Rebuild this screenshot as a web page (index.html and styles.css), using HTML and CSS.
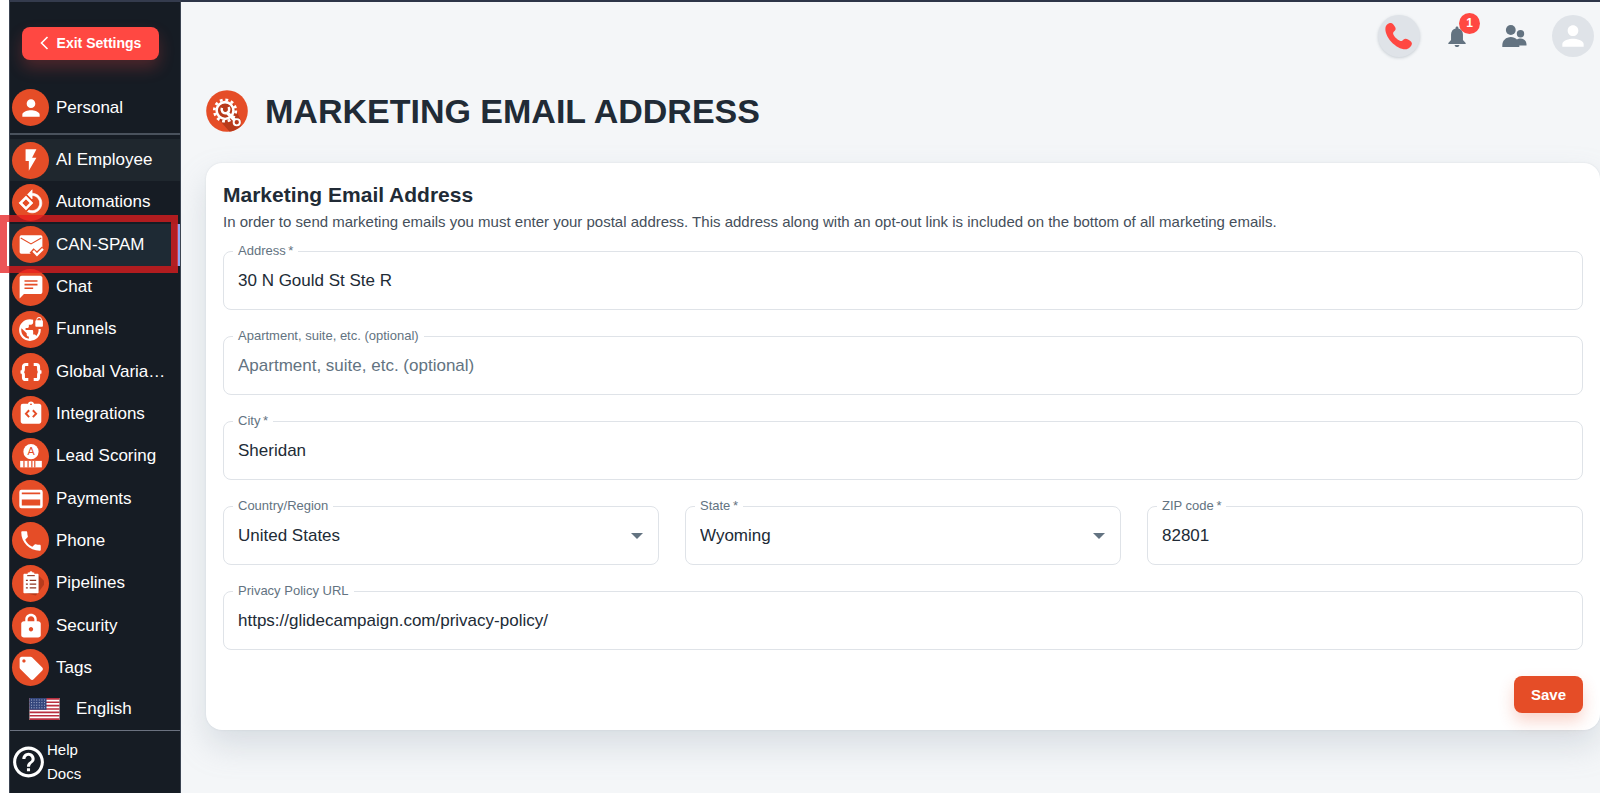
FILE: index.html
```html
<!DOCTYPE html>
<html lang="en">
<head>
  <meta charset="UTF-8">
  <meta name="viewport" content="width=device-width, initial-scale=1.0">
  <title>Marketing Email Address</title>
  <link rel="stylesheet" href="styles.css">
</head>
<body>
  <aside class="sidebar">
    <div class="exit">
      <button type="button" class="exit-btn">
        <svg width="9" height="14" viewBox="0 0 9 14"><path d="M7.5 1L1.5 7l6 6" fill="none" stroke="#fff" stroke-width="1.6"/></svg>
        Exit Settings
      </button>
    </div>

    <a href="#" class="nav-item personal">
      <span class="nav-icon"><svg viewBox="0 0 24 24"><path d="M12 12c2.21 0 4-1.79 4-4s-1.79-4-4-4-4 1.79-4 4 1.79 4 4 4zm0 2c-2.67 0-8 1.34-8 4v2h16v-2c0-2.66-5.33-4-8-4z"/></svg></span>
      <span class="nav-text">Personal</span>
    </a>

    <nav class="nav">
      <a href="#" class="nav-item hover">
        <span class="nav-icon"><svg viewBox="0 0 24 24"><path d="M7 2v11h3v9l7-12h-4l4-8z"/></svg></span>
        <span class="nav-text">AI Employee</span>
      </a>
      <a href="#" class="nav-item">
        <span class="nav-icon"><svg viewBox="0 0 24 24"><path stroke="#fff" stroke-width=".6" d="M7.34 6.41L.86 12.9l6.49 6.48 6.49-6.48-6.5-6.49zM3.69 12.9l3.66-3.66L11 12.9l-3.66 3.66-3.65-3.66zm15.67-6.26C17.61 4.88 15.3 4 13 4V.76L8.76 5 13 9.24V6c1.79 0 3.58.68 4.95 2.05 2.73 2.73 2.73 7.17 0 9.9C16.58 19.32 14.79 20 13 20c-.97 0-1.94-.21-2.84-.61l-1.49 1.49C10.02 21.62 11.51 22 13 22c2.3 0 4.61-.88 6.36-2.64 3.52-3.51 3.52-9.21 0-12.72z"/></svg></span>
        <span class="nav-text">Automations</span>
      </a>
      <a href="#" class="nav-item active">
        <span class="nav-icon"><svg viewBox="0 0 24 24"><rect x="1.5" y="3" width="21" height="17" rx="1.5"/><path d="M2.5 5.5l9.5 5.5 9.5-5.5" fill="none" stroke="#e54d27" stroke-width="1.1"/><path d="M12.5 17l5 4.500 6.500-6" fill="none" stroke="#e54d27" stroke-width="5.500"/><path d="M14 17.500l3.500 3.500 5.500-5.500" fill="none" stroke="#fff" stroke-width="2.200"/></svg></span>
        <span class="nav-text">CAN-SPAM</span>
        <span class="highlight"></span>
      </a>
      <a href="#" class="nav-item">
        <span class="nav-icon"><svg viewBox="0 0 24 24"><path d="M20.500 1.500h-17C2.400 1.500 1.500 2.300 1.500 3.400V22.500l4-4h15c1.100 0 2-.9 2-2V3.500c0-1.100-.9-2-2-2z"/><path d="M6 6.500h12M6 9.800h12M6 13.100h8" stroke="#e54d27" stroke-width="1.500"/></svg></span>
        <span class="nav-text">Chat</span>
      </a>
      <a href="#" class="nav-item">
        <span class="nav-icon"><svg viewBox="0 0 24 24"><path d="M22 4v-.5C22 2.12 20.88 1 19.5 1S17 2.12 17 3.500V4c-.55 0-1 .45-1 1v4c0 .55.45 1 1 1h5c.55 0 1-.45 1-1V5c0-.55-.45-1-1-1zm-.8 0h-3.400v-.5c0-.94.76-1.700 1.700-1.700s1.700.76 1.700 1.700V4zm-2.280 8c.04.33.08.66.08 1 0 2.080-.8 3.970-2.100 5.390-.26-.81-1-1.390-1.900-1.390h-1v-3c0-.55-.45-1-1-1H7v-2h2c.55 0 1-.45 1-1V8h2c1.100 0 2-.9 2-2V3.460c-.95-.3-1.950-.46-3-.46C5.480 3 1 7.480 1 13s4.480 10 10 10 10-4.480 10-10c0-.34-.02-.67-.05-1h-2.030zM10 20.930c-3.950-.49-7-3.850-7-7.930 0-.62.08-1.210.21-1.790L8 16v1c0 1.100.9 2 2 2v1.930z"/></svg></span>
        <span class="nav-text">Funnels</span>
      </a>
      <a href="#" class="nav-item">
        <span class="nav-icon"><svg viewBox="0 0 24 24"><path d="M9.500 5H7.200C5.900 5 5 5.900 5 7.200v2.300c0 1.300-.9 2.500-2.700 2.500 1.800 0 2.700 1.200 2.700 2.500v2.300C5 18.100 5.900 19 7.200 19h2.300M14.500 5h2.300C18.100 5 19 5.900 19 7.200v2.300c0 1.300.9 2.500 2.700 2.500-1.800 0-2.700 1.200-2.700 2.500v2.300c0 1.300-.9 2.200-2.200 2.200h-2.300" fill="none" stroke="#fff" stroke-width="2.800"/></svg></span>
        <span class="nav-text">Global Varia…</span>
      </a>
      <a href="#" class="nav-item">
        <span class="nav-icon"><svg viewBox="0 0 24 24"><path d="M19.500 2.500h-4.700C14.400 1.300 13.300.5 12 .5s-2.400.8-2.800 2H4.500a2 2 0 0 0-2 2v14.500c0 1.100.9 2 2 2h15c1.100 0 2-.9 2-2V4.500c0-1.100-.9-2-2-2z"/><circle cx="12" cy="3" r=".8" fill="#e54d27"/><path d="M10.300 8.500L7.300 11.700l3 3.200M13.700 8.500l3 3.200-3 3.200" fill="none" stroke="#e54d27" stroke-width="1.800"/></svg></span>
        <span class="nav-text">Integrations</span>
      </a>
      <a href="#" class="nav-item">
        <span class="nav-icon"><svg viewBox="0 0 24 24"><circle cx="12" cy="8" r="7"/><text x="12" y="11.500" class="score-letter">A</text><path d="M2 16.500h20v6H2z"/><path d="M5.500 16.500v6M9.300 16.500v6M12.800 16.500v6M15.500 16.500v6" stroke="#e54d27" stroke-width="1.100"/></svg></span>
        <span class="nav-text">Lead Scoring</span>
      </a>
      <a href="#" class="nav-item">
        <span class="nav-icon"><svg viewBox="0 0 24 24"><rect x="1.200" y="3.500" width="21.600" height="17" rx="2"/><path d="M3.500 6h17v1.500h-17zM3.500 12.500h17V18h-17z" fill="#e54d27"/></svg></span>
        <span class="nav-text">Payments</span>
      </a>
      <a href="#" class="nav-item">
        <span class="nav-icon"><svg viewBox="0 0 24 24"><path d="M6.620 10.790c1.440 2.830 3.760 5.140 6.590 6.590l2.200-2.200c.27-.27.67-.36 1.020-.24 1.120.37 2.330.57 3.570.57.55 0 1 .45 1 1V20c0 .55-.45 1-1 1-9.390 0-17-7.610-17-17 0-.55.45-1 1-1h3.500c.55 0 1 .45 1 1 0 1.250.2 2.450.57 3.570.11.35.03.74-.25 1.020l-2.200 2.200z"/></svg></span>
        <span class="nav-text">Phone</span>
      </a>
      <a href="#" class="nav-item">
        <span class="nav-icon"><svg viewBox="0 0 24 24"><path d="M18.500 4.500l7 7-9 12-11-2.500z" fill="#b73a1c"/><path d="M6 3.500h3V2.200h1.500a1.600 1.600 0 0 1 3 0H15v1.300h3c.6 0 1 .4 1 1v16c0 .6-.4 1-1 1H6c-.6 0-1-.4-1-1v-16c0-.6.400-1 1-1z"/><path d="M8.500 5.200h7" stroke="#8f3420"/><path d="M7.300 9.500h1.800M7.300 13h1.800M7.300 16.500h1.800M10.800 9.500h6M10.800 13h6M10.800 16.500h6" stroke="#8f3420" stroke-width="1.200"/></svg></span>
        <span class="nav-text">Pipelines</span>
      </a>
      <a href="#" class="nav-item">
        <span class="nav-icon"><svg viewBox="0 0 24 24"><path d="M18.500 7.500h-1.200V5.800C17.300 2.900 15 .7 12 .7S6.700 2.900 6.700 5.800v1.700H5.500c-1.400 0-2.500 1-2.500 2.200v10.800c0 1.200 1.100 2 2.500 2h13c1.400 0 2.500-.8 2.500-2V9.700c0-1.200-1.100-2.200-2.500-2.200zM12 17c-1.100 0-2-.9-2-2s.9-2 2-2 2 .9 2 2-.9 2-2 2zm3.100-9.500H8.900V6c0-1.710 1.390-3.100 3.100-3.100 1.710 0 3.100 1.390 3.100 3.100v1.500z"/></svg></span>
        <span class="nav-text">Security</span>
      </a>
      <a href="#" class="nav-item">
        <span class="nav-icon"><svg viewBox="0 0 24 24"><path d="M22.410 11.580l-9.500-9.500C12.550 1.720 12 1.500 11.500 1.500H3.500c-1.100 0-2 .9-2 2v8c0 .55.22 1.050.59 1.420l9.500 9.500c.36.36.86.58 1.410.58.55 0 1.050-.22 1.410-.59l8-8c.37-.36.59-.86.59-1.410 0-.55-.23-1.060-.59-1.420zM5.500 7C4.670 7 4 6.330 4 5.500S4.670 4 5.500 4 7 4.670 7 5.500 6.330 7 5.500 7z"/></svg></span>
        <span class="nav-text">Tags</span>
      </a>
    </nav>

    <button type="button" class="language">
      <svg class="flag" viewBox="0 0 30 22">
        <rect width="30" height="22" fill="#fff"/>
        <path d="M0 .850h30M0 4.230h30M0 7.610h30M0 11h30M0 14.380h30M0 17.760h30M0 21.150h30" stroke="#b92f3f" stroke-width="1.700"/>
        <rect width="17" height="11.800" fill="#34467c"/>
        <path d="M1.500 2h15M1.500 4.600h15M1.500 7.200h15M1.500 9.800h15" stroke="#a9b3d0" stroke-width="1" stroke-dasharray="1 1.600"/>
      </svg>
      English
    </button>

    <a href="#" class="help">
      <svg width="37" height="38" viewBox="0 0 24 24"><path fill="#fff" d="M11 18h2v-2h-2v2zm1-16C6.480 2 2 6.480 2 12s4.480 10 10 10 10-4.480 10-10S17.520 2 12 2zm0 18c-4.410 0-8-3.590-8-8s3.590-8 8-8 8 3.590 8 8-3.590 8-8 8zm0-14c-2.210 0-4 1.790-4 4h2c0-1.100.9-2 2-2s2 .9 2 2c0 2-3 1.750-3 5h2c0-2.250 3-2.500 3-5 0-2.210-1.790-4-4-4z"/></svg>
      <span>Help<br>Docs</span>
    </a>
  </aside>

  <div class="content">
    <header class="topbar">
      <button type="button" class="top-btn filled raised" aria-label="Call">
        <svg width="42" height="42" viewBox="0 0 42 42"><path fill="#ff4842" d="M7.500 12.500c.3-2.400 3.200-4.600 5.400-4.500 1.500.1 2.600 1.500 3.700 3.300 1.300 2 1.500 3.200.2 4.500-1.200 1.200-2 1.700-1.600 3.200.8 2.600 4 5.600 7 6.900 1.600.6 2.400-.1 3.400-1.300 1.200-1.400 2.900-1.200 4.900.2 2.200 1.400 3.800 2.700 3.400 4.300-.5 2.200-2.900 4.700-5.400 5.100-4.600.6-10.700-2.500-15.300-7.500-4.200-4.600-6.400-10.200-5.700-14.200z"/></svg>
      </button>
      <button type="button" class="top-btn" aria-label="Notifications">
        <svg width="26" height="26" viewBox="0 0 24 24"><path fill="#637381" d="M9.800 20.300h4.400c0 1-1 1.900-2.200 1.900s-2.200-.9-2.200-1.900zM12 3.200c.8 0 1.300.6 1.300 1.300v.5c2.600.6 4.200 2.700 4.200 5.600v5l2.500 2.900v.8H4v-.8l2.500-2.900v-5c0-2.900 1.600-5 4.200-5.600v-.5c0-.7.5-1.300 1.300-1.300z"/></svg>
        <span class="badge">1</span>
      </button>
      <button type="button" class="top-btn" aria-label="Contacts">
        <svg width="26" height="26" viewBox="0 0 26 26"><g fill="#637381"><circle cx="8.800" cy="7" r="4.900"/><circle cx="18.500" cy="10.700" r="3.700"/><path d="M.3 24v-1.500c0-5 3.800-8.500 8.500-8.500 2.500 0 4.700 1 6.200 2.600 1-.8 2.200-1.100 3.500-1.100 3.500 0 6 2.700 6 6v1h-7.200V24z"/></g></svg>
      </button>
      <button type="button" class="top-btn filled" aria-label="Account">
        <svg width="32" height="32" viewBox="0 0 24 24"><path fill="#fff" d="M12 12c2.210 0 4-1.790 4-4s-1.790-4-4-4-4 1.790-4 4 1.790 4 4 4zm0 2c-2.670 0-8 1.340-8 4v2h16v-2c0-2.660-5.330-4-8-4z"/></svg>
      </button>
    </header>

    <main>
      <div class="page-title">
        <svg width="42" height="42" viewBox="0 0 43 43">
          <circle cx="21.500" cy="21.500" r="21.300" fill="#e54d27"/>
          <path d="M28 14l-16 15 12 13.600a21.300 21.300 0 0 0 11.500-5.500L36 32z" fill="#b83a1b"/>
          <circle cx="19.500" cy="21" r="8.600" fill="#b83a1b" stroke="#fff" stroke-width="2.600"/>
          <circle cx="19.500" cy="21" r="11" fill="none" stroke="#fff" stroke-width="2.800" stroke-dasharray="2.900 2.860"/>
          <path d="M21.500 23l8 8" stroke="#fff" stroke-width="3.400"/>
          <path d="M16.300 18.200c-1 3.200 1 6 4 5.600 3-.5 4.400-3.500 2.800-6.400" fill="none" stroke="#fff" stroke-width="2.600"/>
          <circle cx="31.500" cy="33" r="3.200" fill="#b83a1b" stroke="#fff" stroke-width="2"/>
        </svg>
        <h1>MARKETING EMAIL ADDRESS</h1>
      </div>

      <form class="card">
        <h2>Marketing Email Address</h2>
        <p>In order to send marketing emails you must enter your postal address. This address along with an opt-out link is included on the bottom of all marketing emails.</p>

        <div class="fields">
          <div class="field wide">
            <label for="address">Address&thinsp;*</label>
            <input type="text" id="address" value="30 N Gould St Ste R">
          </div>
          <div class="field wide">
            <label for="apartment">Apartment, suite, etc. (optional)</label>
            <input type="text" id="apartment" placeholder="Apartment, suite, etc. (optional)">
          </div>
          <div class="field wide">
            <label for="city">City&thinsp;*</label>
            <input type="text" id="city" value="Sheridan">
          </div>
          <div class="field select">
            <label for="country">Country/Region</label>
            <select id="country"><option>United States</option></select>
          </div>
          <div class="field select">
            <label for="state">State&thinsp;*</label>
            <select id="state"><option>Wyoming</option></select>
          </div>
          <div class="field">
            <label for="zip">ZIP code&thinsp;*</label>
            <input type="text" id="zip" value="82801">
          </div>
          <div class="field wide">
            <label for="privacy">Privacy Policy URL</label>
            <input type="text" id="privacy" value="https://glidecampaign.com/privacy-policy/">
          </div>
        </div>

        <div class="actions">
          <button type="button" class="save-btn">Save</button>
        </div>
      </form>
    </main>
  </div>
</body>
</html>
```
FILE: styles.css
```css
* {
  box-sizing: border-box;
}
body {
  margin: 0;
  padding-left: 9px;
  display: flex;
  min-height: 100vh;
  background: #fff;
  color: #212b36;
  font-family: "Liberation Sans", Arial, sans-serif;
}
button, input, select {
  font-family: inherit;
}
button {
  border: none;
  cursor: pointer;
}
a {
  color: #fff;
  text-decoration: none;
}

/* Sidebar */
.sidebar {
  flex: none;
  width: 172px;
  display: flex;
  flex-direction: column;
  background: #161c24;
  border: 1px solid #3b4452;
  border-top: 2px solid #343b4d;
  border-bottom: none;
}
.exit {
  padding: 25px 21px 27px 12px;
}
.exit-btn {
  display: flex;
  align-items: center;
  justify-content: center;
  gap: 8px;
  width: 100%;
  height: 33px;
  padding: 0 0 2px;
  border-radius: 8px;
  background: #ff4842;
  color: #fff;
  font-size: 14px;
  font-weight: bold;
  white-space: nowrap;
  box-shadow: 0 8px 16px rgba(255, 72, 66, 0.24);
}
.nav-item {
  position: relative;
  display: flex;
  align-items: center;
  gap: 7px;
  padding: 0 14px 0 2px;
  font-size: 17px;
}
.personal {
  height: 41px;
  margin-bottom: 5px;
}
.nav {
  flex: 1;
  display: flex;
  flex-direction: column;
  padding-top: 4px;
  border-top: 2px solid #4a525d;
}
.nav .nav-item {
  flex: 1 0 0;
}
.nav-icon {
  flex: none;
  display: flex;
  align-items: center;
  justify-content: center;
  width: 37px;
  height: 37px;
  border-radius: 50%;
  background: #e54d27;
}
.nav-icon svg {
  width: 26px;
  height: 26px;
  fill: #fff;
}
.score-letter {
  fill: #e54d27;
  font-size: 10px;
  text-anchor: middle;
}
.nav-text {
  white-space: nowrap;
}
.hover {
  background: #1f272e;
}
.active {
  background: #1e2a34;
  box-shadow: inset -3px 0 0 #8da4ef;
}
/* Red frame round the current page */
.highlight {
  position: absolute;
  top: -9px;
  right: 2px;
  bottom: -7px;
  left: -10px;
  z-index: 1;
  border: 7px solid rgba(230, 28, 30, 0.75);
}
.language {
  display: flex;
  align-items: center;
  gap: 16px;
  height: 41px;
  padding: 0 0 2px 19px;
  background: none;
  color: #fff;
  font-size: 17px;
}
.flag {
  width: 31px;
  height: 22px;
}
.help {
  display: flex;
  align-items: center;
  height: 63px;
  border-top: 1px solid #6b7280;
  font-size: 15px;
  line-height: 24px;
}

/* Content */
.content {
  flex: 1;
  min-width: 0;
  background: #f4f6f8;
  border-top: 2px solid #2d3548;
  overflow: hidden;
}
.topbar {
  display: flex;
  align-items: center;
  justify-content: flex-end;
  gap: 16px;
  height: 68px;
  padding-right: 6px;
}
.top-btn {
  position: relative;
  display: flex;
  align-items: center;
  justify-content: center;
  width: 42px;
  height: 42px;
  padding: 0;
  border-radius: 50%;
  background: none;
}
.filled {
  background: #dfe3e8;
}
.raised {
  box-shadow: 0 1px 3px rgba(99, 115, 129, 0.3);
}
.badge {
  position: absolute;
  top: -2px;
  right: -2px;
  width: 21px;
  height: 21px;
  border-radius: 50%;
  background: #ff4842;
  color: #fff;
  font-size: 12px;
  font-weight: bold;
  line-height: 21px;
}
main {
  padding: 20px 0 0 25px;
}
.page-title {
  display: flex;
  align-items: center;
  gap: 17px;
  margin-bottom: 31px;
}
h1 {
  margin: 0;
  font-size: 34px;
  line-height: 41px;
}
.card {
  padding: 17px;
  border-radius: 16px;
  background: #fff;
  box-shadow: 0 0 2px rgba(145, 158, 171, 0.24), 0 16px 32px rgba(145, 158, 171, 0.28);
}
h2 {
  margin: 0;
  font-size: 21px;
  line-height: 30px;
}
.card p {
  margin: 0 0 17px;
  color: #454f5b;
  font-size: 15px;
  line-height: 24px;
}
.fields {
  display: grid;
  grid-template-columns: repeat(3, 1fr);
  gap: 26px;
}
.field {
  position: relative;
  min-width: 0;
}
.wide {
  grid-column: 1 / -1;
}
.field label {
  position: absolute;
  top: -8px;
  left: 10px;
  padding: 0 5px;
  background: #fff;
  color: #637381;
  font-size: 13px;
  line-height: 16px;
}
.field input,
.field select {
  display: block;
  width: 100%;
  height: 59px;
  padding: 0 14px;
  border: 1px solid #dfe3e8;
  border-radius: 8px;
  background: #fff;
  color: #212b36;
  font-size: 17px;
  appearance: none;
}
.field input::placeholder {
  color: #637381;
  opacity: 1;
}
.select::after {
  content: "";
  position: absolute;
  top: 27px;
  right: 16px;
  border: 6px solid transparent;
  border-top-color: #637381;
  border-bottom: none;
  pointer-events: none;
}
.actions {
  display: flex;
  justify-content: flex-end;
  margin-top: 26px;
}
.save-btn {
  height: 37px;
  padding: 0 17px;
  border-radius: 8px;
  background: #e54d27;
  color: #fff;
  font-size: 15px;
  font-weight: bold;
  box-shadow: 0 8px 16px rgba(229, 77, 39, 0.24);
}
```
